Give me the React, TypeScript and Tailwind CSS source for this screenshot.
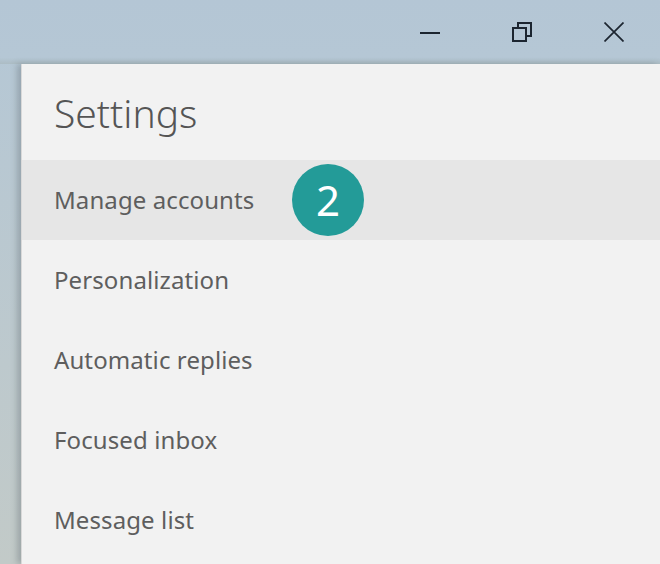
import React from "react";

const items = ["Manage accounts", "Personalization", "Automatic replies", "Focused inbox", "Message list"];

export default function App() {
  return (
    <div className="w-[660px] h-[564px] overflow-hidden flex flex-col bg-gradient-to-b from-[#b4c7d6] to-[#c2cac8] font-['Noto_Sans','Open_Sans',sans-serif]">
      <div className="h-[64px] shrink-0 flex items-start bg-gradient-to-b from-[#b4c6d5] via-[#b5c7d5] via-90% to-[#acbcc4]">
        <div className="ml-[420px] mt-[32px] w-[20px] h-[2px] bg-[#1c2530]" />
        <svg className="ml-[72px] mt-[22px]" width="20" height="20" viewBox="0 0 20 20" fill="none" stroke="#1c2530" strokeWidth="2">
          <rect x="1" y="6" width="13" height="13" />
          <path d="M6 5V1H19V14H15" />
        </svg>
        <svg className="ml-[72px] mt-[22px]" width="20" height="20" viewBox="0 0 20 20" fill="none" stroke="#1c2530" strokeWidth="1.700">
          <path d="M0.500 0.500L19.500 19.500M19.500 0.500L0.500 19.500" />
        </svg>
      </div>
      <div className="flex-1 ml-[21px] bg-[#f2f2f2] border-l border-[#d9d9d9] shadow-[-4px_0_6px_rgba(90,100,105,0.35)]">
        <div className="h-[96px] pl-[32px] pt-[21px] text-[39px] leading-[56px] font-light text-[#555555]">Settings</div>
        {items.map((t, i) => (
          <div key={t} className={`relative h-[80px] pl-[32px] flex items-center text-[24px] text-[#5e5e5e] ${i === 0 ? "bg-[#e6e6e6]" : ""}`}>
            <span className="tracking-[0.1px]">{t}</span>
            {i === 0 && (
              <span className="absolute left-[270px] top-[4px] w-[72px] h-[72px] rounded-full bg-[#239b98] text-white text-[42px] leading-none flex items-center justify-center">2</span>
            )}
          </div>
        ))}
      </div>
    </div>
  );
}
